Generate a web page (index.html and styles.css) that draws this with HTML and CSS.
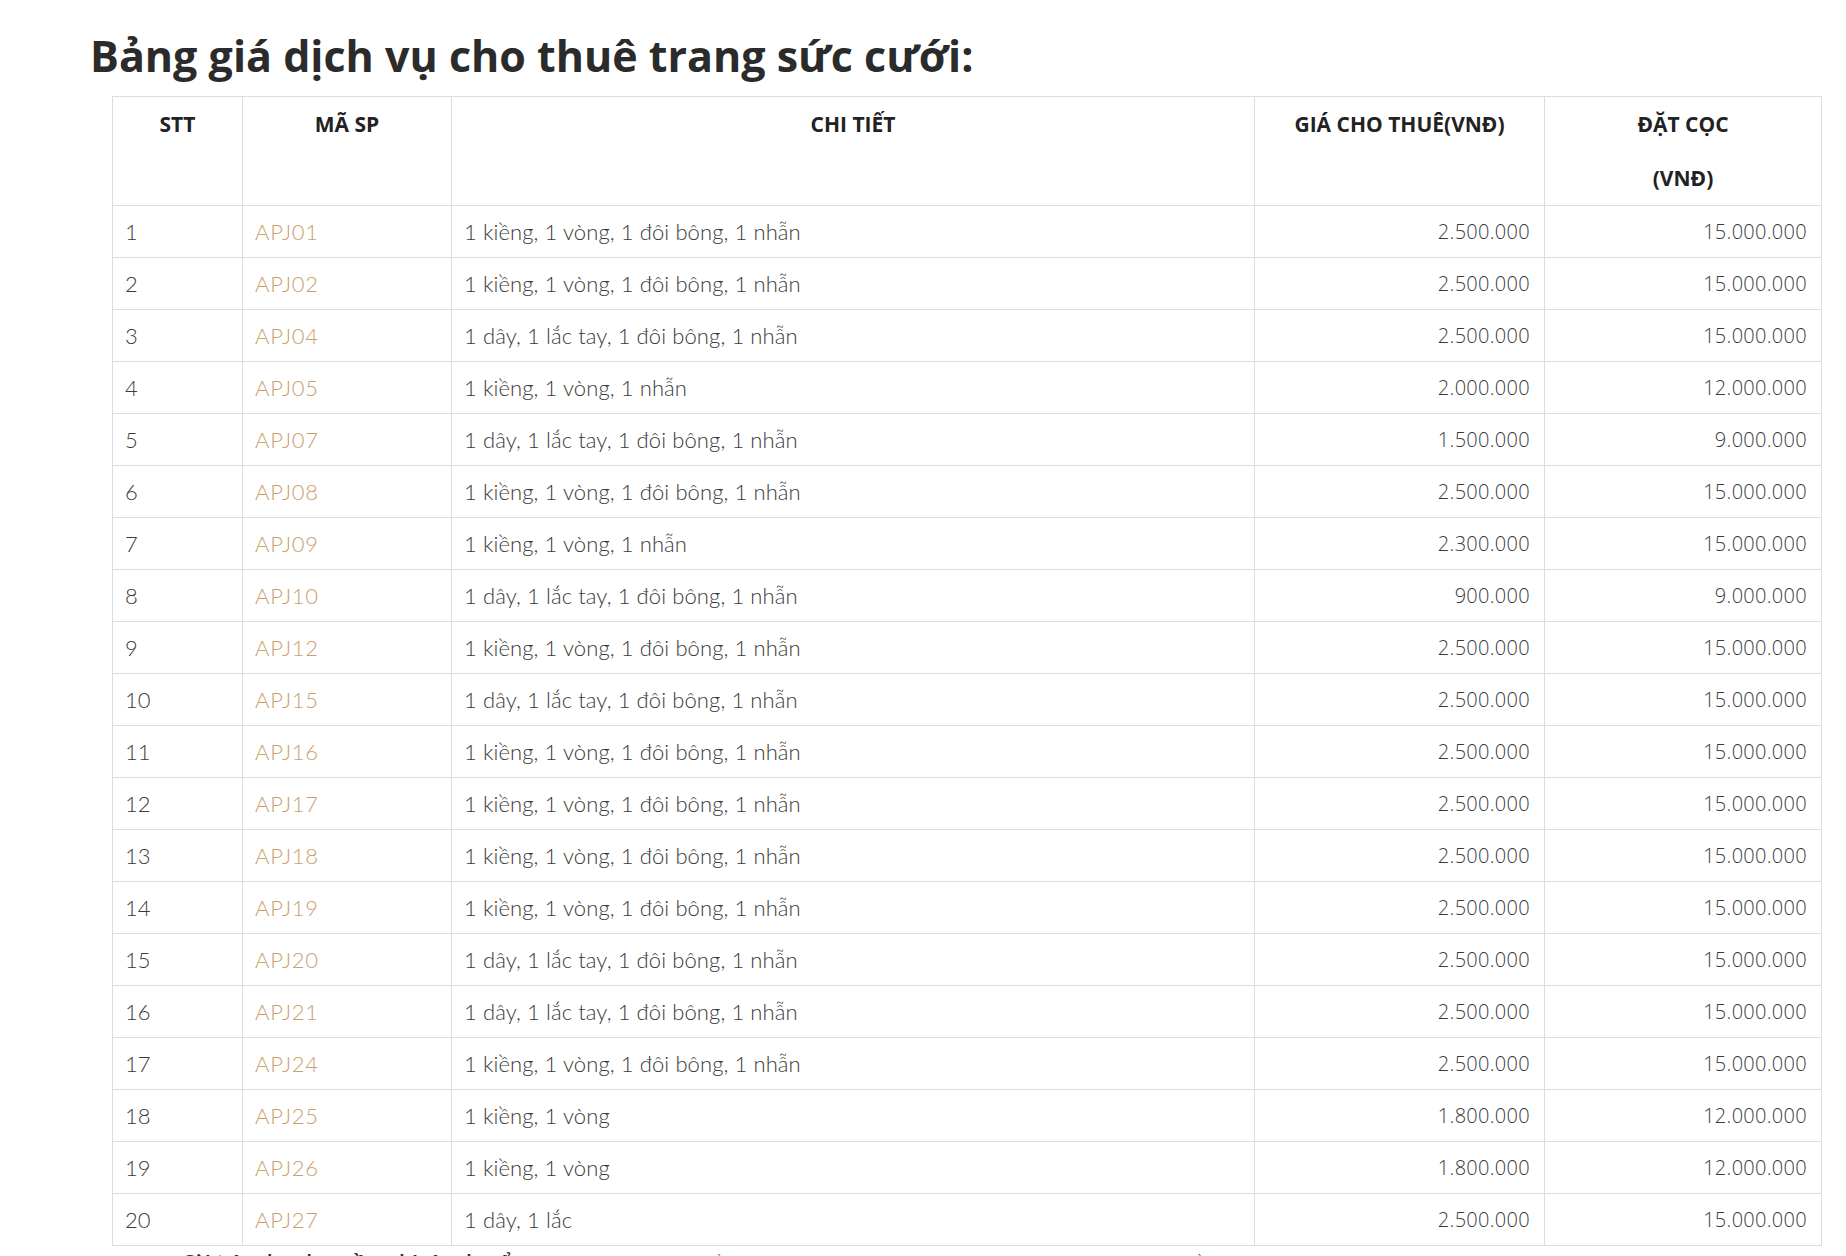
FILE: index.html
```html
<!DOCTYPE html>
<html lang="vi">
<head>
<meta charset="utf-8">
<title>Bảng giá dịch vụ cho thuê trang sức cưới</title>
<link rel="stylesheet" href="styles.css">
</head>
<body>
<div class="page">
  <h2 class="title">Bảng giá dịch vụ cho thuê trang sức cưới:</h2>
  <div class="table-wrap">
    <table class="price">
      <colgroup>
        <col class="c-stt"><col class="c-ma"><col class="c-ct"><col class="c-gia"><col class="c-coc">
      </colgroup>
      <thead>
        <tr>
          <th>STT</th>
          <th>MÃ SP</th>
          <th>CHI TIẾT</th>
          <th>GIÁ CHO THUÊ(VNĐ)</th>
          <th>ĐẶT CỌC<br>(VNĐ)</th>
        </tr>
      </thead>
      <tbody>
        <tr><td>1</td><td><a class="code">APJ01</a></td><td>1 kiềng, 1 vòng, 1 đôi bông, 1 nhẫn</td><td class="num">2.500.000</td><td class="num">15.000.000</td></tr>
        <tr><td>2</td><td><a class="code">APJ02</a></td><td>1 kiềng, 1 vòng, 1 đôi bông, 1 nhẫn</td><td class="num">2.500.000</td><td class="num">15.000.000</td></tr>
        <tr><td>3</td><td><a class="code">APJ04</a></td><td>1 dây, 1 lắc tay, 1 đôi bông, 1 nhẫn</td><td class="num">2.500.000</td><td class="num">15.000.000</td></tr>
        <tr><td>4</td><td><a class="code">APJ05</a></td><td>1 kiềng, 1 vòng, 1 nhẫn</td><td class="num">2.000.000</td><td class="num">12.000.000</td></tr>
        <tr><td>5</td><td><a class="code">APJ07</a></td><td>1 dây, 1 lắc tay, 1 đôi bông, 1 nhẫn</td><td class="num">1.500.000</td><td class="num">9.000.000</td></tr>
        <tr><td>6</td><td><a class="code">APJ08</a></td><td>1 kiềng, 1 vòng, 1 đôi bông, 1 nhẫn</td><td class="num">2.500.000</td><td class="num">15.000.000</td></tr>
        <tr><td>7</td><td><a class="code">APJ09</a></td><td>1 kiềng, 1 vòng, 1 nhẫn</td><td class="num">2.300.000</td><td class="num">15.000.000</td></tr>
        <tr><td>8</td><td><a class="code">APJ10</a></td><td>1 dây, 1 lắc tay, 1 đôi bông, 1 nhẫn</td><td class="num">900.000</td><td class="num">9.000.000</td></tr>
        <tr><td>9</td><td><a class="code">APJ12</a></td><td>1 kiềng, 1 vòng, 1 đôi bông, 1 nhẫn</td><td class="num">2.500.000</td><td class="num">15.000.000</td></tr>
        <tr><td>10</td><td><a class="code">APJ15</a></td><td>1 dây, 1 lắc tay, 1 đôi bông, 1 nhẫn</td><td class="num">2.500.000</td><td class="num">15.000.000</td></tr>
        <tr><td>11</td><td><a class="code">APJ16</a></td><td>1 kiềng, 1 vòng, 1 đôi bông, 1 nhẫn</td><td class="num">2.500.000</td><td class="num">15.000.000</td></tr>
        <tr><td>12</td><td><a class="code">APJ17</a></td><td>1 kiềng, 1 vòng, 1 đôi bông, 1 nhẫn</td><td class="num">2.500.000</td><td class="num">15.000.000</td></tr>
        <tr><td>13</td><td><a class="code">APJ18</a></td><td>1 kiềng, 1 vòng, 1 đôi bông, 1 nhẫn</td><td class="num">2.500.000</td><td class="num">15.000.000</td></tr>
        <tr><td>14</td><td><a class="code">APJ19</a></td><td>1 kiềng, 1 vòng, 1 đôi bông, 1 nhẫn</td><td class="num">2.500.000</td><td class="num">15.000.000</td></tr>
        <tr><td>15</td><td><a class="code">APJ20</a></td><td>1 dây, 1 lắc tay, 1 đôi bông, 1 nhẫn</td><td class="num">2.500.000</td><td class="num">15.000.000</td></tr>
        <tr><td>16</td><td><a class="code">APJ21</a></td><td>1 dây, 1 lắc tay, 1 đôi bông, 1 nhẫn</td><td class="num">2.500.000</td><td class="num">15.000.000</td></tr>
        <tr><td>17</td><td><a class="code">APJ24</a></td><td>1 kiềng, 1 vòng, 1 đôi bông, 1 nhẫn</td><td class="num">2.500.000</td><td class="num">15.000.000</td></tr>
        <tr><td>18</td><td><a class="code">APJ25</a></td><td>1 kiềng, 1 vòng</td><td class="num">1.800.000</td><td class="num">12.000.000</td></tr>
        <tr><td>19</td><td><a class="code">APJ26</a></td><td>1 kiềng, 1 vòng</td><td class="num">1.800.000</td><td class="num">12.000.000</td></tr>
        <tr><td>20</td><td><a class="code">APJ27</a></td><td>1 dây, 1 lắc</td><td class="num">2.500.000</td><td class="num">15.000.000</td></tr>
      </tbody>
    </table>
    <p class="note">Lưu ý: <strong>Giá trên chưa bao gồm phí vận chuyển</strong>, quý khách vui lòng kiểm tra kỹ trước khi nhận, mọi hư hỏng sẽ được trừ vào tiền đặt cọc.</p>
  </div>
</div>
</body>
</html>
```
FILE: styles.css
```css
html, body {
  margin: 0;
  padding: 0;
  background: #ffffff;
}

body {
  font-family: "Lato", "Noto Sans", sans-serif;
  color: #333333;
}

.page {
  padding: 0 0 0 90px;
  width: 1731px;
}

.title {
  margin: 0;
  padding-top: 30px;
  font-family: "Open Sans", "Noto Sans", sans-serif;
  font-weight: 700;
  font-size: 43px;
  line-height: 52px;
  color: #2b2b2b;
  letter-spacing: 0;
}

.table-wrap {
  padding: 14px 0 0 22px;
}

.price {
  border-collapse: collapse;
  width: 1709px;
  table-layout: fixed;
}

.c-stt { width: 130px; }
.c-ma { width: 209px; }
.c-ct { width: 803px; }
.c-gia { width: 290px; }
.c-coc { width: 277px; }

.price th,
.price td {
  border: 1px solid #dddddd;
}

.price th {
  font-family: "Open Sans", "Noto Sans", sans-serif;
  font-weight: 700;
  font-size: 21px;
  line-height: 54px;
  height: 108px;
  padding: 0 8px;
  vertical-align: top;
  text-align: center;
  color: #222222;
}

.price td {
  height: 51px;
  padding: 0 14px 0 12px;
  font-family: "Lato", "Noto Sans", sans-serif;
  font-weight: 300;
  font-size: 22px;
  letter-spacing: 0.1px;
  color: #3a3a3a;
  vertical-align: middle;
  white-space: nowrap;
}

.price td.num {
  text-align: right;
  font-family: "Open Sans", "Noto Sans", sans-serif;
  font-weight: 300;
  font-size: 20px;
  letter-spacing: 0.3px;
  padding-right: 14px;
  color: #3a3a3a;
}

.code {
  color: #cba06c;
  text-decoration: none;
  letter-spacing: 0.8px;
}

.note {
  margin: 0;
  padding: 1px 0 0 12px;
  font-size: 20px;
  font-weight: 300;
  line-height: 30px;
  color: #333333;
}

.note strong {
  font-weight: 700;
}
```
